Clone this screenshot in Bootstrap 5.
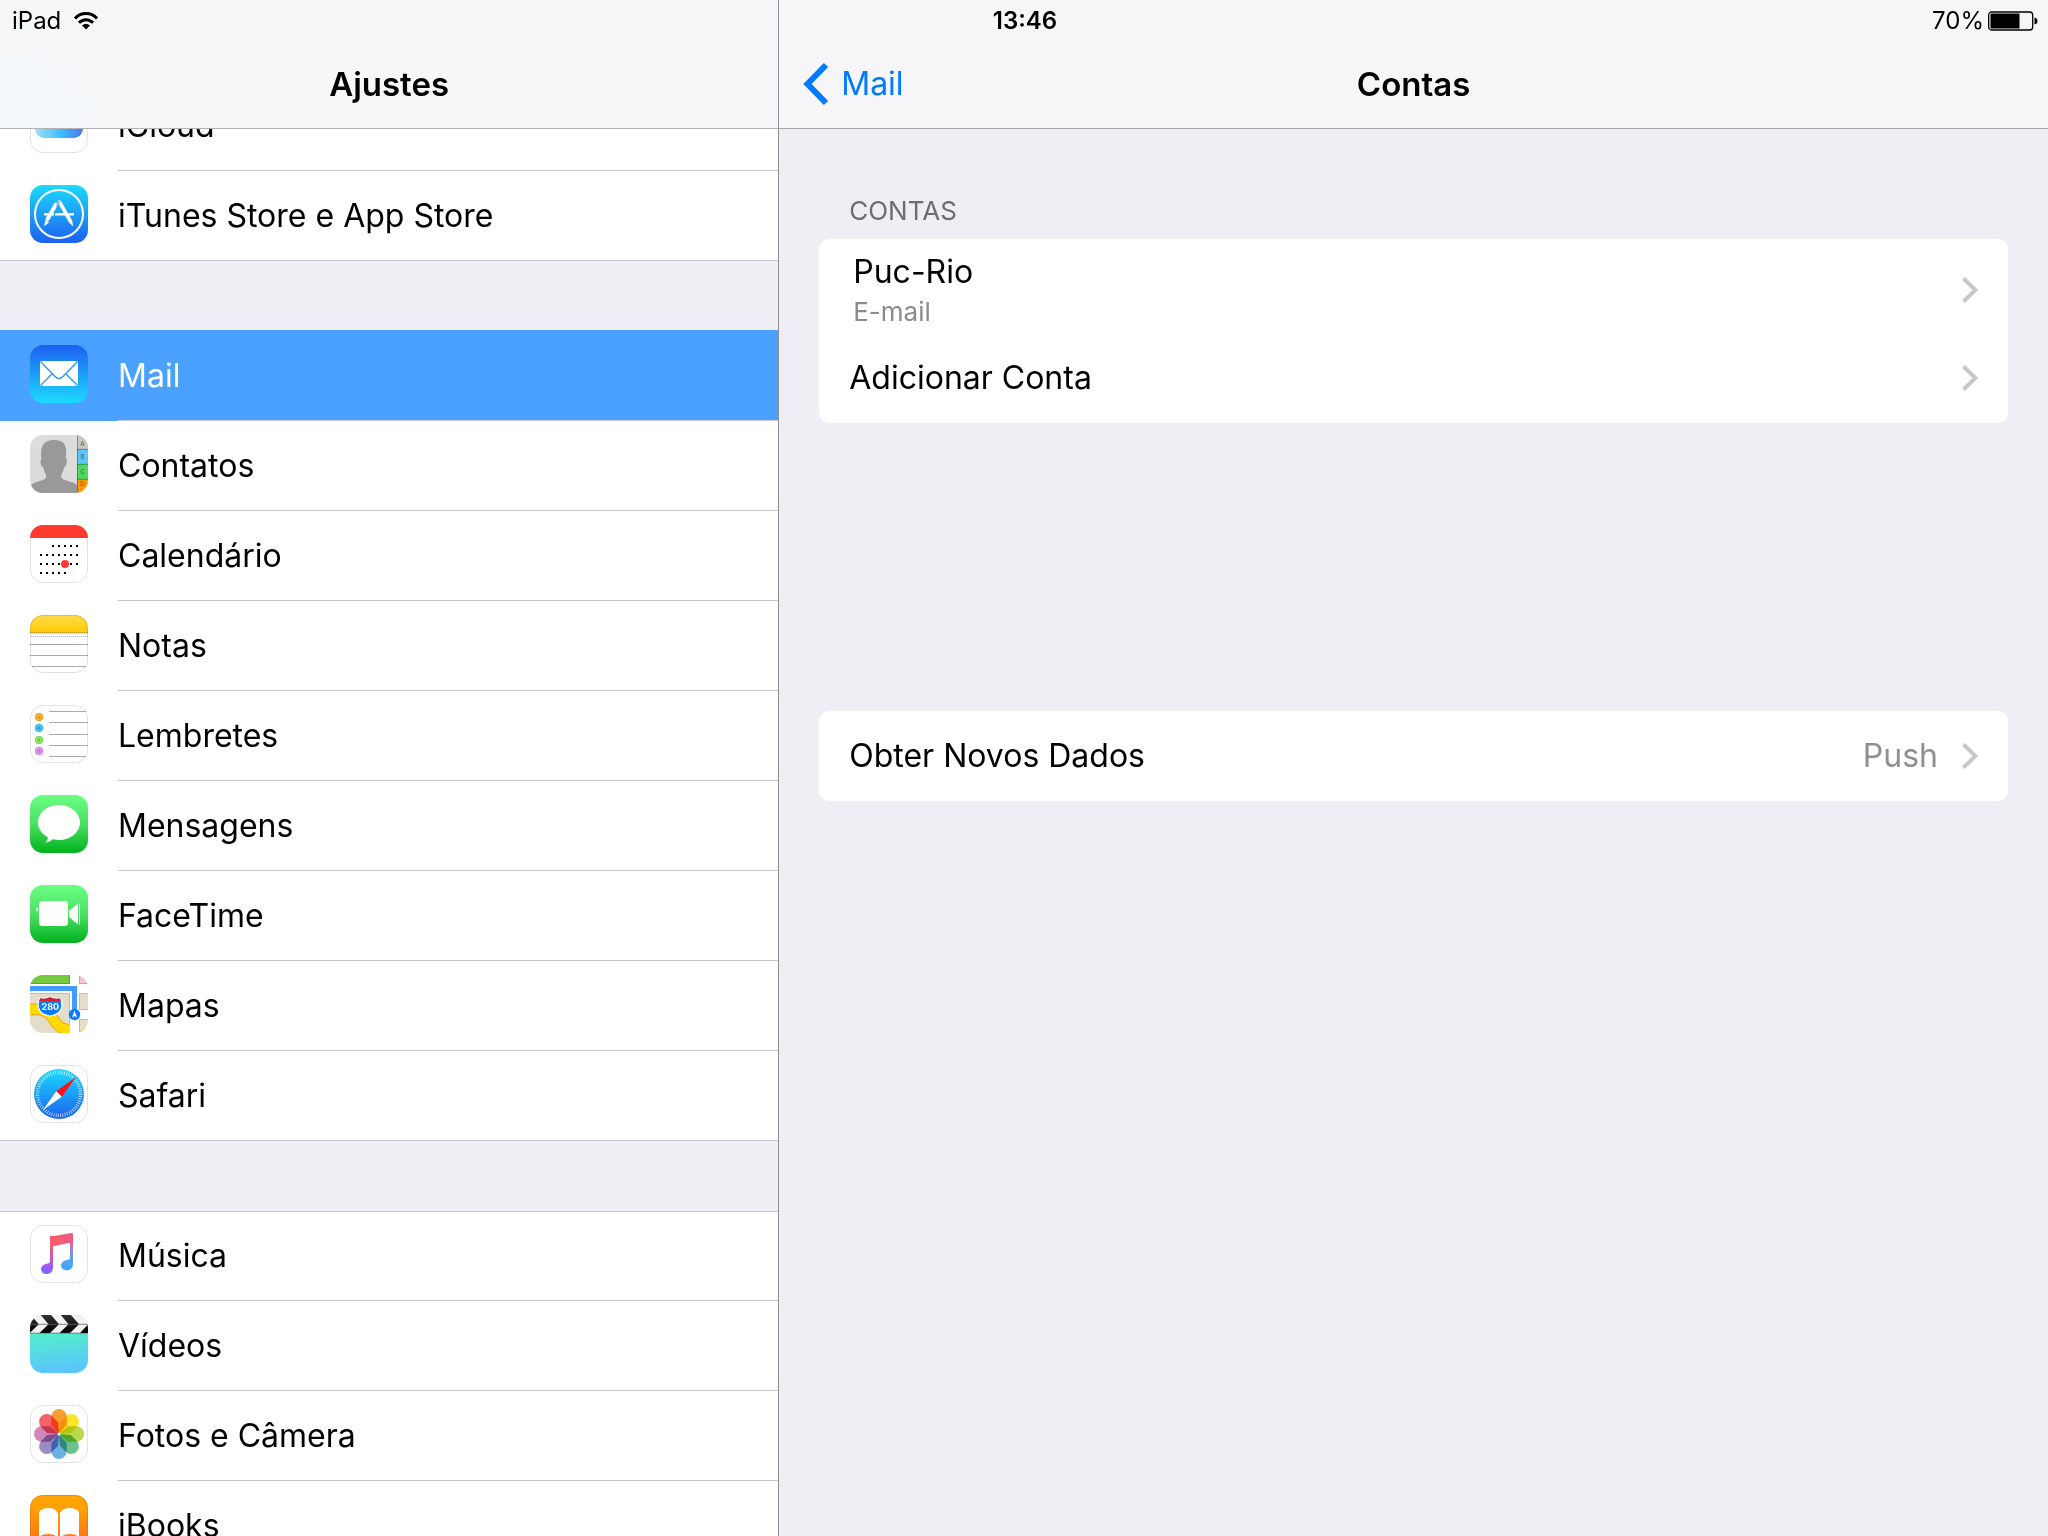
<!DOCTYPE html>
<html lang="pt-BR">
<head>
<meta charset="utf-8">
<meta name="viewport" content="width=device-width, initial-scale=1">
<title>Ajustes</title>
<link href="https://cdn.jsdelivr.net/npm/bootstrap@5.3.0/dist/css/bootstrap.min.css" rel="stylesheet">
<style>
  body { font-family: Inter, "Liberation Sans", sans-serif; font-size: 32px; line-height: 40px; color: #000; background: #efeef4; }
  a { color: inherit; text-decoration: none; }
  .status-bar { height: 42px; font-size: 24px; line-height: 28px; padding: 0 10px 0 12px; z-index: 3; }
  .status-bar > * { flex: 1 1 0; }
  .sidebar { flex: 0 0 38%; }
  .pane { border-left: 1px solid #8e8e93; }
  .titlebar { flex: none; height: 129px; padding: 40px 24px 0; background: #f6f6f9; border-bottom: 1px solid #a7a7ab;
    display: grid; grid-template-columns: 1fr auto 1fr; align-items: center; }
  .sidebar .titlebar { background: radial-gradient(circle at 20px 128px, #f1f7fa, #f7f7f9 110px); border-color: #b2b2b2; }
  .titlebar h1 { font-size: 33px; font-weight: 600; line-height: 40px; }
  .back-link { color: #007aff; gap: 12px; }
  .scrolled { margin-top: -48px; }
  .settings-group { background: #fff; border-radius: 0; margin-bottom: 70px; }
  .settings-group + .settings-group { box-shadow: inset 0 1px 0 #c8c7cc; }
  .settings-group li:last-child { border-bottom: 1px solid #c8c7cc; }
  .settings-row { height: 90px; padding-left: 30px; gap: 30px; }
  li:last-child > .settings-row { height: 89px; }
  .settings-row svg { flex: none; margin-top: 14px; }
  .settings-row span { border-bottom: 1px solid #c8c7cc; }
  li:last-child > .settings-row span { border-bottom: 0; }
  .settings-row.selected { background: #4ba1ff; color: #fff; box-shadow: 0 -1px 0 #4ba1ff; }
  .pane-body { padding: 64px 40px; }
  .section-title { font-size: 26px; line-height: 36px; color: #6d6d72; margin: 0 0 10px; padding-left: 30px; font-weight: 400; }
  .panel { background: #fff; border-radius: 10px; }
  .panel + .panel { margin-top: 288px; }
  .panel-row { height: 90px; padding: 0 30px; }
  .panel-row.two-line { height: 94px; padding: 8px 30px 0 34px; }
  .two-line-text { padding-top: 4px; }
  .sub-label { font-size: 26px; line-height: 40px; color: #8a8a8a; }
  .value-label { color: #8e8e93; gap: 24px; }
</style>
<script src="https://cdn.jsdelivr.net/npm/bootstrap@5.3.0/dist/js/bootstrap.bundle.min.js"></script>
</head>
<body>
<svg width="0" height="0" class="position-absolute" aria-hidden="true">
  <defs>
    <clipPath id="tile"><rect width="58" height="58" rx="13"/></clipPath>
    <linearGradient id="gStore" x2="0" y2="1"><stop stop-color="#1bdbfd"/><stop offset="1" stop-color="#1d60f0"/></linearGradient>
    <linearGradient id="gMail" x2="0" y2="1"><stop stop-color="#1d60f0"/><stop offset="1" stop-color="#1bdbfd"/></linearGradient>
    <linearGradient id="gGreen" x2="0" y2="1"><stop stop-color="#6bff83"/><stop offset=".5" stop-color="#4be065"/><stop offset="1" stop-color="#00b21c"/></linearGradient>
    <linearGradient id="gCloud"><stop stop-color="#9fe0f7"/><stop offset=".55" stop-color="#3dbcff"/><stop offset="1" stop-color="#4a76f2"/></linearGradient>
    <linearGradient id="gNote" x2="0" y2="1"><stop stop-color="#ffdb4c"/><stop offset="1" stop-color="#ffcb05"/></linearGradient>
    <linearGradient id="gVideo" x2="0.1" y2="1"><stop offset=".3" stop-color="#53f0c8"/><stop offset="1" stop-color="#5ac6fc"/></linearGradient>
    <linearGradient id="gClap" x2="0" y2="1"><stop stop-color="#333"/><stop offset="1" stop-color="#000"/></linearGradient>
    <linearGradient id="gBooks" x2="0" y2="1"><stop stop-color="#ffa703"/><stop offset=".25" stop-color="#ffa008"/><stop offset="1" stop-color="#ff5f1f"/></linearGradient>
    <linearGradient id="gMusicA" gradientUnits="userSpaceOnUse" x1="28" y1="10" x2="14" y2="48"><stop stop-color="#ff5b66"/><stop offset=".5" stop-color="#d459b0"/><stop offset=".85" stop-color="#9859ff"/><stop offset="1" stop-color="#7b6bff"/></linearGradient>
    <linearGradient id="gMusicB" gradientUnits="userSpaceOnUse" x1="40" y1="10" x2="38" y2="45"><stop stop-color="#fa5767"/><stop offset=".3" stop-color="#c56fc0"/><stop offset=".65" stop-color="#59a4ef"/><stop offset="1" stop-color="#3fa7fb"/></linearGradient>
    <linearGradient id="gMusicC" gradientUnits="userSpaceOnUse" x1="20" y1="10" x2="43" y2="14"><stop stop-color="#ff5b66"/><stop offset="1" stop-color="#ec5c83"/></linearGradient>
    <path id="petal" d="M21.3 11.7a7.7 7.7 0 0 1 15.4 0V20L29 29l-7.700-9z"/>
    <path id="clapMark" d="M10.700 0H21l8 9.200-9 8.800H9.500l9-8.800z"/>
  </defs>
</svg>

<div class="status-bar position-absolute top-0 start-0 w-100 d-flex align-items-center">
  <div class="d-flex align-items-center gap-2"><span>iPad</span>
    <svg class="ms-1" width="26" height="20" viewBox="0 0 26 20" role="img" aria-label="Wi-Fi"><g fill="none" stroke="#000" stroke-width="3"><path d="M2 7.500C8 .9 18 .9 24 7.500"/><path d="M6 11.800C10 7.600 16 7.600 20 11.800"/></g><path d="M9 14.500q4-3.500 8 0l-4 4z"/></svg>
  </div>
  <div class="text-center fw-semibold">13:46</div>
  <div class="d-flex align-items-center justify-content-end gap-1"><span>70%</span>
    <svg width="50" height="20" viewBox="0 0 50 20" role="img" aria-label="Bateria"><rect x=".7" y="1" width="44" height="18" rx="3" fill="none" stroke="#000" stroke-width="1.300"/><path d="M2.500 3.500q0-1 1-1H31.500v15H3.500q-1 0-1-1zM46.500 6.500q3 .5 3 3.500t-3 3.500z"/></svg>
  </div>
</div>

<div class="d-flex vh-100 overflow-hidden">
  <nav class="sidebar d-flex flex-column" aria-label="Ajustes">
    <header class="titlebar"><span></span><h1 class="m-0">Ajustes</h1><span></span></header>
    <div class="overflow-hidden flex-fill">
      <div class="scrolled">
        <ul class="settings-group list-unstyled">
          <li><a href="#" class="settings-row d-flex">
            <svg width="58" height="58"><rect x=".5" y=".5" width="57" height="57" rx="12.500" fill="#fff" stroke="#e3e3e3"/><path d="M15 43a10 10 0 0 1-2-19.800 8 8 0 0 1 9-6.500 12 12 0 0 1 22 6A10.300 10.300 0 0 1 43 43z" fill="url(#gCloud)"/><rect x="5" y="24" width="48" height="19" rx="9.500" fill="url(#gCloud)"/></svg>
            <span class="flex-fill d-flex align-items-center">iCloud</span></a></li>
          <li><a href="#" class="settings-row d-flex">
            <svg width="58" height="58"><rect width="58" height="58" rx="13" fill="url(#gStore)"/><circle cx="29" cy="29" r="24" fill="none" stroke="#fff" stroke-width="2"/><g fill="none" stroke="#fff"><path d="M14 29.300h10m1 0h10m3.500 0h5.500" stroke-width="2.600"/><path d="M25.800 19.500 17.600 34" stroke-width="4" stroke-linecap="round"/><path d="M29.500 17 40 35.500" stroke-width="3.600" stroke-linecap="round"/></g><path d="m15.200 35 4 2.300-5 4zM38.500 37l3.500-2.200 1.200 6.600z" fill="#fff"/><path d="m26.300 21.500 4.200-6" stroke="#1da7f8"/></svg>
            <span class="flex-fill d-flex align-items-center">iTunes Store e App Store</span></a></li>
        </ul>
        <ul class="settings-group list-unstyled">
          <li><a href="#" class="settings-row selected d-flex" aria-current="page">
            <svg width="58" height="58"><rect width="58" height="58" rx="13" fill="url(#gMail)"/><rect x="10" y="16" width="38" height="25" rx="1" fill="#fff"/><path d="m10.500 16.500 14 14.500q4.500 5 9 0l14-14.500M10.500 40.500 22 29m14 0 11.500 11.500" fill="none" stroke="#2592f5" stroke-width="1.200"/></svg>
            <span class="flex-fill d-flex align-items-center">Mail</span></a></li>
          <li><a href="#" class="settings-row d-flex">
            <svg width="58" height="58"><g clip-path="url(#tile)"><rect width="58" height="58" fill="#dcdcdc"/><path d="M1 58v-8c4-4 11-3.500 14.500-6.500.8-1 .6-2.500.5-4-1.500-1.500-2-4-2.500-7-2-.5-3-3-3-6 0-1.500.3-2.500 1-3-1-9-.3-18.500 12.500-18.500S37 14 35.800 23c1 .5 1.200 2 1 3.500-.3 3-1 5.500-2.800 6-.5 3-1.500 5.500-2.700 7-.1 1.500 0 3 .7 4C36 46.500 43 46 47 50v8z" fill="#999"/><path fill="#c9c6bf" d="M47 0h11v14H47z"/><path fill="#5ac8fa" d="M47 14h11v15H47z"/><path fill="#4cd964" d="M47 29h11v15H47z"/><path fill="#ff9500" d="M47 44h11v14H47z"/><path d="M47.500 0v58M47 14.300h11M47 29.300h11M47 44.300h11" stroke="#000" stroke-opacity=".3"/><g font-size="6" fill="#555" fill-opacity=".75" font-weight="600" text-anchor="middle"><text x="52.500" y="11">A</text><text x="52.500" y="24">B</text><text x="52.500" y="39">C</text><text x="52.500" y="51">D</text></g></g></svg>
            <span class="flex-fill d-flex align-items-center">Contatos</span></a></li>
          <li><a href="#" class="settings-row d-flex">
            <svg width="58" height="58"><rect x=".5" y=".5" width="57" height="57" rx="12.500" fill="#fff" stroke="#e3e3e3"/><path d="M0 13h58A13 13 0 0 0 45 0H13A13 13 0 0 0 0 13z" fill="#ff3b30"/><path d="M22 21h26M10 30h38M10 39h38M10 48h26" stroke="#000" stroke-width="2" stroke-dasharray="2 4"/><circle cx="35" cy="39" r="4" fill="#ff3b30"/></svg>
            <span class="flex-fill d-flex align-items-center">Calendário</span></a></li>
          <li><a href="#" class="settings-row d-flex">
            <svg width="58" height="58"><g clip-path="url(#tile)"><rect width="58" height="58" fill="#fff"/><rect width="58" height="18" fill="url(#gNote)"/><path d="M0 17.500h58" stroke="#d0aa28"/><path d="M0 18.500h58" stroke="#ddd"/><path d="M1 21.500h57" stroke="#aaa" stroke-dasharray="1 1"/><path d="M0 29.500h58M0 40.500h58M2 51.500h54" stroke="#aaa"/></g><rect x=".5" y=".5" width="57" height="57" rx="12.500" fill="none" stroke="#000" stroke-opacity=".12"/></svg>
            <span class="flex-fill d-flex align-items-center">Notas</span></a></li>
          <li><a href="#" class="settings-row d-flex">
            <svg width="58" height="58"><rect x=".5" y=".5" width="57" height="57" rx="12.500" fill="#fff" stroke="#e3e3e3"/><path d="M19 6.500h37M19 17.500h39M19 29.500h39M19 40.500h39M19 51.500h37" stroke="#aaa"/><circle cx="9" cy="12" r="4" fill="#ff9500"/><circle cx="9" cy="23" r="4" fill="#1badf8"/><circle cx="9" cy="35" r="4" fill="#63da38"/><circle cx="9" cy="46" r="4" fill="#cc73e1"/><g fill="none" stroke="#fff" stroke-opacity=".6" stroke-width=".7"><circle cx="9" cy="12" r="2.600"/><circle cx="9" cy="23" r="2.600"/><circle cx="9" cy="35" r="2.600"/><circle cx="9" cy="46" r="2.600"/></g></svg>
            <span class="flex-fill d-flex align-items-center">Lembretes</span></a></li>
          <li><a href="#" class="settings-row d-flex">
            <svg width="58" height="58"><rect width="58" height="58" rx="13" fill="url(#gGreen)"/><path d="M29 10c11.600 0 21 7.800 21 17.500S40.600 45 29 45c-2.200 0-4.300-.3-6.300-.8-2 1.800-4.500 3.300-7.500 3.500 1.500-1.500 2.500-3.500 2.600-5.500C12 39 8 33.600 8 27.500 8 17.800 17.400 10 29 10z" fill="#fff"/></svg>
            <span class="flex-fill d-flex align-items-center">Mensagens</span></a></li>
          <li><a href="#" class="settings-row d-flex">
            <svg width="58" height="58"><rect width="58" height="58" rx="13" fill="url(#gGreen)"/><g fill="#fff"><rect x="9" y="16" width="29" height="25" rx="3.500"/><path d="m39 26 9-7.500v21L39 32zM49 18.500h1v21h-1zM8 22v4.500L6 25.500V23.500z"/></g></svg>
            <span class="flex-fill d-flex align-items-center">FaceTime</span></a></li>
          <li><a href="#" class="settings-row d-flex">
            <svg width="58" height="58"><g clip-path="url(#tile)"><rect width="58" height="58" fill="#fff"/><path d="M0 0h40v9H0z" fill="#76c83c"/><path d="M39.500 0v8.500H0" fill="none" stroke="#5fa52e"/><path d="M49 0h9v9h-9z" fill="#fcc3d2"/><path d="M49.500 0v8.500H58" fill="none" stroke="#cda1ac"/><path d="M0 18h40v40H0zM49 18h9v17h-9zM49 45h9v13h-9z" fill="#e4ddcb"/><path d="M0 18.500h39.500V58M58 18.500h-8.500v16H58m0 10h-8.500V58" fill="none" stroke="#c4bdab"/><path d="M0 34.500C18 33 21 41 26 48c4 5 8 6 14 7" fill="none" stroke="#f0a51e" stroke-width="11.500"/><path d="M0 34.500C18 33 21 41 26 48c4 5 8 6 14 7" fill="none" stroke="#ffdc00" stroke-width="9.500"/><path d="M40 18h9v40h-9z" fill="#fff"/><path d="M49 56q4 0 6-3v5h-6z" fill="#ffcd00"/><path d="M0 13.500h44.500V36" fill="none" stroke="#429bff" stroke-width="5"/><path d="M9.500 23q5 1.500 10.500-1.500 5.500 3 10.500 1.500C35 35 28 40 20 41 12 40 5 35 9.500 23z" fill="#0a7cff" stroke="#fff" stroke-width="1.200"/><path d="M10 23.300q5 1.200 10-1.100 5 2.300 10 1.100l.6 2.700H9.400z" fill="#dc1e28"/><text x="20.300" y="35" font-size="9" font-weight="700" fill="#fff" text-anchor="middle">280</text><circle cx="44.500" cy="39.500" r="5.700" fill="#0a7cff"/><path d="m44.500 35.500 2.500 7-2.500-1.500-2.500 1.500z" fill="#fff"/></g></svg>
            <span class="flex-fill d-flex align-items-center">Mapas</span></a></li>
          <li><a href="#" class="settings-row d-flex">
            <svg width="58" height="58"><rect x=".5" y=".5" width="57" height="57" rx="12.500" fill="#fff" stroke="#e3e3e3"/><circle cx="29" cy="29" r="25" fill="url(#gStore)"/><circle cx="29" cy="29" r="21.500" fill="none" stroke="#fff" stroke-opacity=".75" stroke-width="3.500" stroke-dasharray=".8 1.450"/><path d="M46 12 26.200 26.200l5.600 5.600z" fill="#ff1314"/><path d="m13 45 13.200-18.800 5.600 5.600z" fill="#fff"/></svg>
            <span class="flex-fill d-flex align-items-center">Safari</span></a></li>
        </ul>
        <ul class="settings-group list-unstyled">
          <li><a href="#" class="settings-row d-flex">
            <svg width="58" height="58"><rect x=".5" y=".5" width="57" height="57" rx="12.500" fill="#fff" stroke="#e3e3e3"/><path d="M20 11h3v31.500c0 4-2.800 6.500-6.500 6.500-3.200 0-5.500-2-5.500-4.700 0-3 2.200-5 6-5.600 2.200-.4 3-.8 3-2.700z" fill="url(#gMusicA)"/><path d="M40 10h3v29c0 4-2.800 6.300-6.300 6.300-3.200 0-5.700-1.800-5.700-4.700s2.200-5 6-5.700c2.200-.4 3-.8 3-2.700z" fill="url(#gMusicB)"/><path d="M20 13q0-1.300 1.300-1.600L41.500 8q1.500-.3 1.500 1.200V17.500l-3 .3-17 3.400-3 1.300z" fill="url(#gMusicC)"/></svg>
            <span class="flex-fill d-flex align-items-center">Música</span></a></li>
          <li><a href="#" class="settings-row d-flex">
            <svg width="58" height="58"><g clip-path="url(#tile)"><rect width="58" height="58" fill="url(#gVideo)"/><rect width="58" height="18" fill="#f2f2f2"/><g fill="url(#gClap)"><use href="#clapMark" x="-20.200"/><use href="#clapMark"/><use href="#clapMark" x="20"/><path d="m51 0 7 7V5.500L53 0zM50 18h8V9.500z"/></g><path d="M0 9.300h58M0 18.200h58" stroke="#666" stroke-width=".8"/></g></svg>
            <span class="flex-fill d-flex align-items-center">Vídeos</span></a></li>
          <li><a href="#" class="settings-row d-flex">
            <svg width="58" height="58"><rect x=".5" y=".5" width="57" height="57" rx="12.500" fill="#fff" stroke="#e3e3e3"/><g style="isolation:isolate"><g style="mix-blend-mode:multiply"><use href="#petal" fill="#fa9e33"/></g><g style="mix-blend-mode:multiply"><use href="#petal" fill="#fbe529" transform="rotate(45 29 29)"/></g><g style="mix-blend-mode:multiply"><use href="#petal" fill="#b9d94c" transform="rotate(90 29 29)"/></g><g style="mix-blend-mode:multiply"><use href="#petal" fill="#6cc28b" transform="rotate(135 29 29)"/></g><g style="mix-blend-mode:multiply"><use href="#petal" fill="#6db1e0" transform="rotate(180 29 29)"/></g><g style="mix-blend-mode:multiply"><use href="#petal" fill="#9a8bc6" transform="rotate(225 29 29)"/></g><g style="mix-blend-mode:multiply"><use href="#petal" fill="#cf88b8" transform="rotate(270 29 29)"/></g><g style="mix-blend-mode:multiply"><use href="#petal" fill="#f4636b" transform="rotate(315 29 29)"/></g></g><circle cx="29" cy="29" r="1.500" fill="#fff"/></svg>
            <span class="flex-fill d-flex align-items-center">Fotos e Câmera</span></a></li>
          <li><a href="#" class="settings-row d-flex">
            <svg width="58" height="58"><rect width="58" height="58" rx="13" fill="url(#gBooks)"/><rect x=".5" y=".5" width="57" height="57" rx="12.500" fill="none" stroke="#c96a00" stroke-opacity=".4"/><path d="M9 17q3-4 9.500-4T28 18v25q-3-4-9.500-4T9 42zM30 18q3-5 9.500-5t9.500 4v25q-3-3-9.500-3T30 43z" fill="#fff"/></svg>
            <span class="flex-fill d-flex align-items-center">iBooks</span></a></li>
        </ul>
      </div>
    </div>
  </nav>

  <main class="pane flex-fill">
    <header class="titlebar">
      <a href="#" class="back-link d-flex align-items-center"><svg width="26" height="44" viewBox="0 0 26 44" fill="none" stroke="#007aff" stroke-width="6"><path d="M23 3 4.500 22 23 41"/></svg>Mail</a>
      <h1 class="m-0">Contas</h1><span></span>
    </header>
    <div class="pane-body">
      <h2 class="section-title">CONTAS</h2>
      <div class="panel">
        <a href="#" class="panel-row two-line d-flex align-items-center justify-content-between">
          <span class="two-line-text"><span class="d-block">Puc-Rio</span><span class="sub-label d-block">E-mail</span></span>
          <svg width="16" height="26" fill="none" stroke="#c7c7cc" stroke-width="4"><path d="m1.500 1.500 12 11.500-12 11.500"/></svg></a>
        <a href="#" class="panel-row d-flex align-items-center justify-content-between"><span>Adicionar Conta</span>
          <svg width="16" height="26" fill="none" stroke="#c7c7cc" stroke-width="4"><path d="m1.500 1.500 12 11.500-12 11.500"/></svg></a>
      </div>
      <div class="panel">
        <a href="#" class="panel-row d-flex align-items-center justify-content-between"><span>Obter Novos Dados</span>
          <span class="value-label d-flex align-items-center">Push
          <svg width="16" height="26" fill="none" stroke="#c7c7cc" stroke-width="4"><path d="m1.500 1.500 12 11.500-12 11.500"/></svg></span></a>
      </div>
    </div>
  </main>
</div>
</body>
</html>
